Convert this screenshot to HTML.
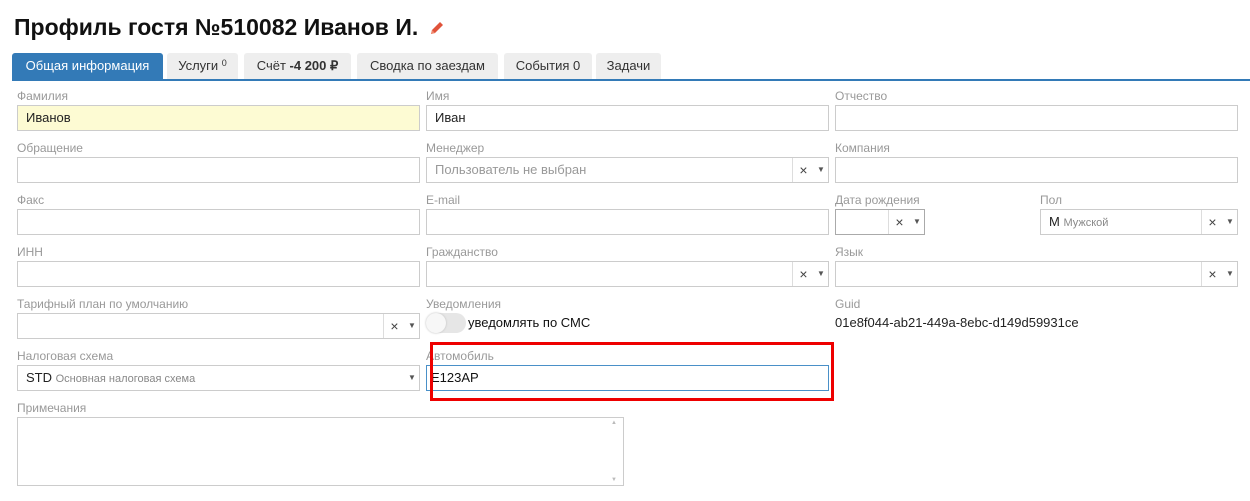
<!DOCTYPE html>
<html><head><meta charset="utf-8"><style>
*{box-sizing:border-box;margin:0;padding:0}
body{width:1250px;height:501px;background:#fff;font-family:"Liberation Sans",sans-serif;position:relative;overflow:hidden;color:#222}
.a{position:absolute}
h1{position:absolute;left:14px;top:14px;font-size:23px;font-weight:bold;color:#111;letter-spacing:0;white-space:nowrap}
.tab{position:absolute;top:53px;height:26px;background:#eee;font-size:13px;line-height:26px;text-align:center;color:#333;border-radius:3px 3px 0 0;white-space:nowrap}
.tab.on{background:#337ab7;color:#fff}
.line{position:absolute;left:12px;right:0;top:79px;height:2px;background:#337ab7}
.l{position:absolute;font-size:12px;color:#999;white-space:nowrap}
.i{position:absolute;height:26px;border:1px solid #ccc;background:#fff;font-size:13px;line-height:24px;padding-left:8px;white-space:nowrap}
.x{position:absolute;top:0;height:24px;width:22px;border-left:1px solid #ddd;text-align:center;font-size:14px;color:#444;line-height:24px}
.d{position:absolute;top:0;right:0;height:24px;width:14px;font-size:8px;color:#555;line-height:24px;text-align:center}
</style></head><body>
<h1>Профиль гостя №510082 Иванов И.</h1>
<svg class="a" style="left:429px;top:20px" width="16" height="16" viewBox="0 0 16 16"><path d="M2 14 L3 10 L11 2 L14 5 L6 13 Z" fill="#e0533a"/><path d="M2 14 L3 10 L6 13 Z" fill="#f08a70"/></svg>
<div class="tab on" style="left:12px;width:151px">Общая информация</div>
<div class="tab" style="left:167px;width:71px">Услуги <span style="font-size:9px;vertical-align:4px;line-height:0">0</span></div>
<div class="tab" style="left:244px;width:107px">Счёт <b>-4 200 ₽</b></div>
<div class="tab" style="left:357px;width:141px">Сводка по заездам</div>
<div class="tab" style="left:504px;width:88px">События 0</div>
<div class="tab" style="left:596px;width:65px">Задачи</div>
<div class="line"></div>

<div class="l" style="left:17px;top:89px">Фамилия</div>
<div class="i" style="left:17px;top:105px;width:403px;background:#fdfbd3">Иванов</div>
<div class="l" style="left:426px;top:89px">Имя</div>
<div class="i" style="left:426px;top:105px;width:403px">Иван</div>
<div class="l" style="left:835px;top:89px">Отчество</div>
<div class="i" style="left:835px;top:105px;width:403px"></div>

<div class="l" style="left:17px;top:141px">Обращение</div>
<div class="i" style="left:17px;top:157px;width:403px"></div>
<div class="l" style="left:426px;top:141px">Менеджер</div>
<div class="i" style="left:426px;top:157px;width:403px;color:#999">Пользователь не выбран<span class="x" style="right:14px">×</span><span class="d">▼</span></div>
<div class="l" style="left:835px;top:141px">Компания</div>
<div class="i" style="left:835px;top:157px;width:403px"></div>

<div class="l" style="left:17px;top:193px">Факс</div>
<div class="i" style="left:17px;top:209px;width:403px"></div>
<div class="l" style="left:426px;top:193px">E-mail</div>
<div class="i" style="left:426px;top:209px;width:403px"></div>
<div class="l" style="left:835px;top:193px">Дата рождения</div>
<div class="i" style="left:835px;top:209px;width:90px;border-color:#aaa"><span class="x" style="right:14px">×</span><span class="d">▼</span></div>
<div class="l" style="left:1040px;top:193px">Пол</div>
<div class="i" style="left:1040px;top:209px;width:198px">М <span style="font-size:11px;color:#888">Мужской</span><span class="x" style="right:14px">×</span><span class="d">▼</span></div>

<div class="l" style="left:17px;top:245px">ИНН</div>
<div class="i" style="left:17px;top:261px;width:403px"></div>
<div class="l" style="left:426px;top:245px">Гражданство</div>
<div class="i" style="left:426px;top:261px;width:403px"><span class="x" style="right:14px">×</span><span class="d">▼</span></div>
<div class="l" style="left:835px;top:245px">Язык</div>
<div class="i" style="left:835px;top:261px;width:403px"><span class="x" style="right:14px">×</span><span class="d">▼</span></div>

<div class="l" style="left:17px;top:297px">Тарифный план по умолчанию</div>
<div class="i" style="left:17px;top:313px;width:403px"><span class="x" style="right:14px">×</span><span class="d">▼</span></div>
<div class="l" style="left:426px;top:297px">Уведомления</div>
<div class="a" style="left:426px;top:313px;width:40px;height:20px;border-radius:10px;background:#e6e6e6"><div class="a" style="left:0;top:0;width:20px;height:20px;border-radius:10px;background:#f7f7f7;box-shadow:0 0 2px #bbb"></div></div>
<div class="a" style="left:468px;top:315px;font-size:13px;color:#111">уведомлять по СМС</div>
<div class="l" style="left:835px;top:297px">Guid</div>
<div class="a" style="left:835px;top:315px;font-size:13px;color:#222">01e8f044-ab21-449a-8ebc-d149d59931ce</div>

<div class="l" style="left:17px;top:349px">Налоговая схема</div>
<div class="i" style="left:17px;top:365px;width:403px">STD <span style="font-size:11px;color:#888">Основная налоговая схема</span><span class="d">▼</span></div>
<div class="l" style="left:426px;top:349px">Автомобиль</div>
<div class="i" style="left:426px;top:365px;width:403px;border-color:#4a90c8;padding-left:4px;color:#111">Е123АР</div>
<div class="a" style="left:430px;top:342px;width:404px;height:59px;border:3px solid #e00"></div>

<div class="l" style="left:17px;top:401px">Примечания</div>
<div class="i" style="left:17px;top:417px;width:607px;height:69px"><span class="a" style="right:6px;top:0;font-size:6px;color:#bbb;line-height:10px">▲</span><span class="a" style="right:6px;bottom:0;font-size:6px;color:#bbb;line-height:10px">▼</span></div>
</body></html>
